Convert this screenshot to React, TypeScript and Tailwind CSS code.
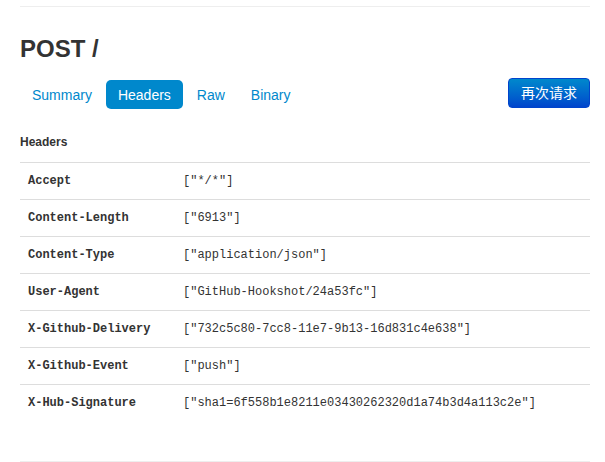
const tabs = ['Summary', 'Headers', 'Raw', 'Binary'];

const headers: [string, string][] = [
  ['Accept', '["*/*"]'],
  ['Content-Length', '["6913"]'],
  ['Content-Type', '["application/json"]'],
  ['User-Agent', '["GitHub-Hookshot/24a53fc"]'],
  ['X-Github-Delivery', '["732c5c80-7cc8-11e7-9b13-16d831c4e638"]'],
  ['X-Github-Event', '["push"]'],
  ['X-Hub-Signature', '["sha1=6f558b1e8211e03430262320d1a74b3d4a113c2e"]'],
];

export default function App() {
  return (
    <div className="min-h-[462px] bg-white font-['Liberation_Sans','Noto_Sans_CJK_SC',sans-serif] text-[#333]">
      <div className="ml-[20px] w-[570px] pt-[6px]">
        <div className="border-t border-[#eeeeee]" />

        {/* Title */}
        <h3 className="mt-[22px] text-[24px] font-bold leading-[40px]">POST /</h3>

        {/* Tabs + action */}
        <div className="mt-[9px] flex items-start justify-between">
          <ul className="mt-[2px] flex gap-[2px]">
            {tabs.map((tab) => (
              <li
                key={tab}
                className={
                  tab === 'Headers'
                    ? 'flex h-[29px] items-center rounded-[5px] bg-[#0088cc] px-[12px] pt-[1px] text-[14px] text-white'
                    : 'flex h-[29px] items-center rounded-[5px] px-[12px] pt-[1px] text-[14px] text-[#0088cc]'
                }
              >
                {tab}
              </li>
            ))}
          </ul>
          <button className="h-[30px] rounded-[4px] border border-[#0044cc] bg-gradient-to-b from-[#0088cc] to-[#0044cc] px-[12px] text-[14px] text-white">
            再次请求
          </button>
        </div>

        {/* Headers table */}
        <div className="mt-[23px] text-[12px] font-bold leading-[20px]">Headers</div>
        <table className="mt-[10px] w-full border-collapse font-['Liberation_Mono',monospace] text-[12px] leading-[20px]">
          <tbody>
            {headers.map(([key, value]) => (
              <tr key={key} className="border-t border-[#dddddd]">
                <td className="w-[155px] px-[8px] py-[8px] font-bold">{key}</td>
                <td className="px-[8px] py-[8px]">{value}</td>
              </tr>
            ))}
          </tbody>
        </table>

        <div className="mt-[40px] border-t border-[#eeeeee]" />
      </div>
    </div>
  );
}
